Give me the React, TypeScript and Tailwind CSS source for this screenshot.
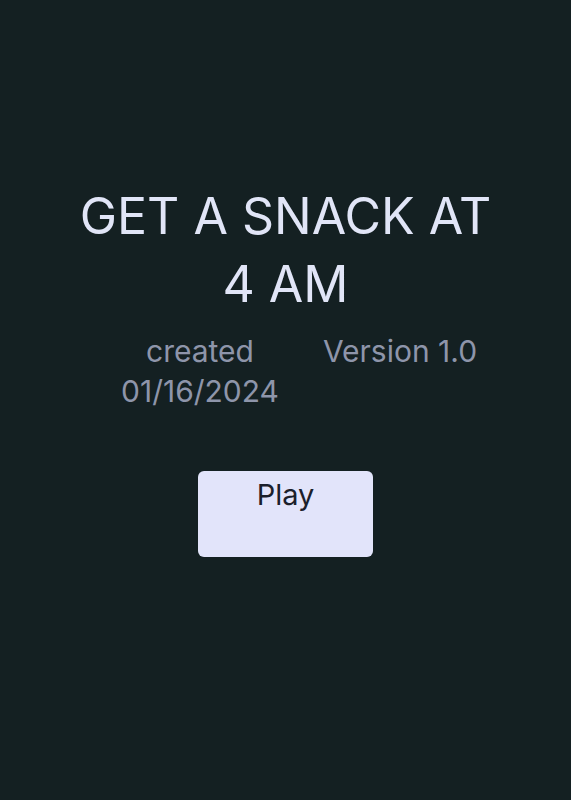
import React from 'react';

const App: React.FC = () => {
  return (
    <div
      className="w-full min-h-[800px] bg-[#142022] flex flex-col items-center pt-[182px]"
      style={{ fontFamily: 'Inter, "Noto Sans", sans-serif' }}
    >
      <h1 className="text-[50px] leading-[68px] text-[#e1e5f7] text-center font-normal w-[440px]">
        GET A SNACK AT 4 AM
      </h1>
      <div className="flex justify-center gap-[20px] ml-[29px] mt-[13px] text-[30px] leading-[40px] text-[#8e95aa]">
        <p className="w-[180px] text-center">created 01/16/2024</p>
        <p className="w-[180px] text-center">Version 1.0</p>
      </div>
      <button className="mt-[60px] w-[175px] h-[86px] rounded-md bg-[#e2e4fa] text-[#1b202b] text-[29px] flex justify-center pt-[2px]">
        Play
      </button>
    </div>
  );
};

export default App;
